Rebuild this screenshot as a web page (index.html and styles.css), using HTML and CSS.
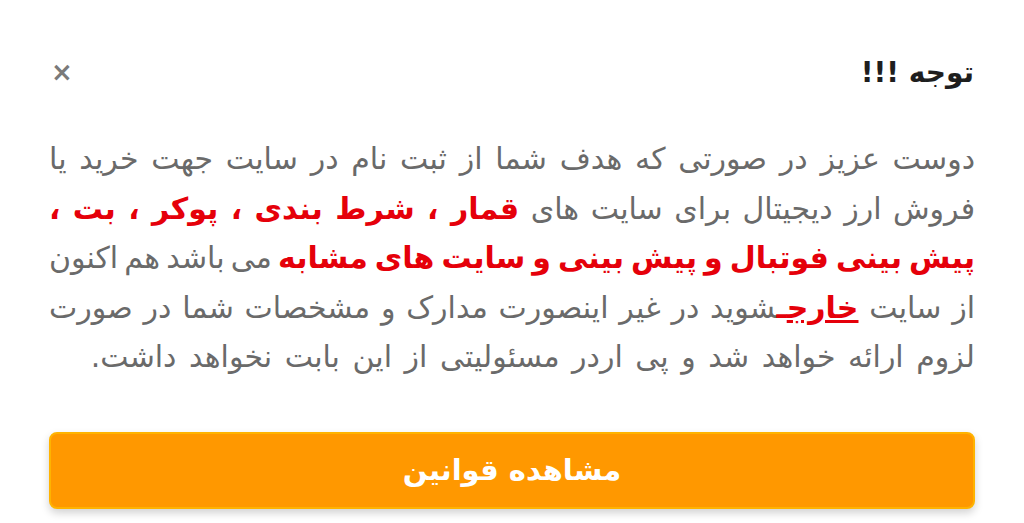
FILE: index.html
```html
<!DOCTYPE html>
<html lang="fa" dir="rtl">
<head>
<meta charset="utf-8">
<link rel="stylesheet" href="styles.css">
</head>
<body>
<div class="modal">
  <div class="modal-header">
    <h2 class="modal-title">توجه !!!</h2>
    <span class="close">×</span>
  </div>
  <div class="modal-text">
    <span class="line">دوست عزیز در صورتی که هدف شما از ثبت نام در سایت جهت خرید یا</span>
    <span class="line">فروش ارز دیجیتال برای سایت های <b class="hl">قمار ، شرط بندی ، پوکر ، بت ،</b></span>
    <span class="line tight"><b class="hl">پیش بینی فوتبال و پیش بینی و سایت های مشابه</b> می باشد هم اکنون</span>
    <span class="line">از سایت <a class="hl link">خارج</a><span class="hl">ـ</span>شوید در غیر اینصورت مدارک و مشخصات شما در صورت</span>
    <span class="line last">لزوم ارائه خواهد شد و پی اردر مسئولیتی از این بابت نخواهد داشت.</span>
  </div>
  <button class="btn">مشاهده قوانین</button>
</div>
</body>
</html>
```

FILE: styles.css
```css
html, body {
  margin: 0;
  padding: 0;
  background: #ffffff;
}
.modal {
  box-sizing: border-box;
  width: 1024px;
  height: 523px;
  padding: 50px 49px 0 49px;
  display: flex;
  flex-direction: column;
  font-family: "DejaVu Sans", sans-serif;
}
.modal-header {
  display: flex;
  justify-content: space-between;
  align-items: center;
  height: 44px;
  padding-right: 1px;
}
.modal-title {
  margin: 0;
  font-family: "DejaVu Sans", sans-serif;
  font-weight: bold;
  font-size: 28px;
  color: #1e1e1e;
}
.close {
  font-family: "DejaVu Sans", sans-serif;
  font-weight: bold;
  font-size: 26px;
  color: #7a7a7a;
  padding-left: 2px;
}
.modal-text {
  margin-top: 40px;
  font-size: 30px;
  line-height: 49.5px;
  color: #6a6a6a;
}
.line {
  display: block;
  white-space: nowrap;
  text-align: justify;
  text-align-last: justify;
}
.line.tight {
  word-spacing: -6px;
}
.line.last {
  text-align-last: right;
  word-spacing: 3px;
}
.hl {
  color: #e5000a;
  font-weight: bold;
}
.link {
  text-decoration: underline;
}
.btn {
  margin-top: 50px;
  height: 77px;
  width: 100%;
  border: 2px solid #ffb300;
  border-radius: 8px;
  background: #ff9800;
  color: #fff;
  font-family: "DejaVu Sans", sans-serif;
  font-weight: bold;
  font-size: 29px;
  box-shadow: 0 4px 8px rgba(0,0,0,0.18);
}
```
